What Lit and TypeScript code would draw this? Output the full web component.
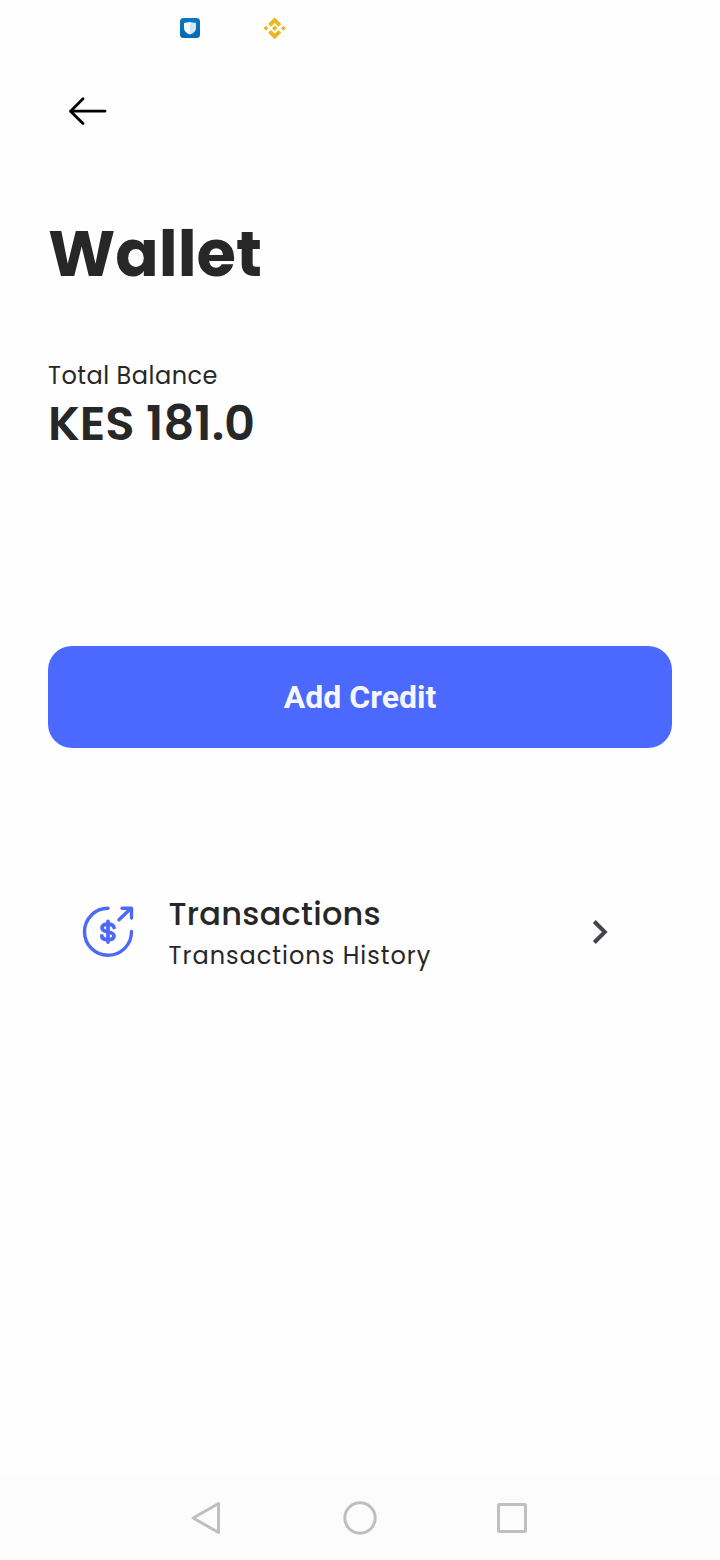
import { LitElement, html, css } from "lit";
import { customElement } from "lit/decorators.js";

@customElement("app-root")
class AppRoot extends LitElement {
  static styles = css`
    :host { display: flex; flex-direction: column; height: 1560px; background: #fefefe; color: #272727; font-family: Poppins, Inter, sans-serif; }
    * { box-sizing: border-box; }
    svg { display: block; flex: none; }
    .status { display: flex; height: 56px; padding-left: 179px; align-items: center; gap: 62px; }
    .top { height: 158px; padding: 40px 0 0 67px; }
    main { flex: 1; padding: 0 48px; display: flex; flex-direction: column; }
    h1 { margin: 0; font-size: 64px; line-height: 80px; font-weight: 700; white-space: nowrap; }
    .balance { margin-top: 64px; height: 288px; white-space: nowrap; }
    .label { font-size: 24px; line-height: 36px; letter-spacing: 0.5px; }
    .amount { font-size: 48px; line-height: 60px; font-weight: 600; }
    .add { height: 102px; border: 0; border-radius: 24px; background: #4b69ff; color: #f6f6fc; font: 700 32px Roboto, sans-serif; padding: 0; }
    .row { margin-top: 144px; display: flex; padding: 0 62px 0 32px; height: 82px; }
    .pay { margin-top: 12px; }
    .words { flex: 1; padding: 1px 0 0 32.5px; white-space: nowrap; }
    .title { font-size: 32px; line-height: 42px; font-weight: 500; letter-spacing: 0.25px; }
    .sub { font-size: 24px; line-height: 36px; letter-spacing: 1px; margin-top: 3px; }
    .chev { margin-top: 26px; }
    nav { height: 84px; background: #fcfcfc; display: flex; justify-content: center; gap: 112px; padding-top: 22px; }
  `;
  render() {
    return html`
      <div class="status">
        <svg width="22" height="22" viewBox="0 0 22 22">
          <defs><linearGradient id="b" x2="0" y2="1"><stop stop-color="#0879bd" /><stop offset="1" stop-color="#0668b0" /></linearGradient></defs>
          <rect x="1" y="1" width="20" height="20" rx="3.5" fill="url(#b)" />
          <path d="M11 5Q13.5 5.500 17 6V11.500Q16.500 15.500 11 17.500Z" fill="#d3e8f5" />
          <path d="M11 5Q8.500 5.500 5 6V11.500Q5.500 15.500 11 17.500Z" fill="#f4faff" />
        </svg>
        <svg width="24" height="24" viewBox="0 0 24 24" fill="#e8b923">
          <path d="M11.700 1.300L18.300 7.900L15.500 10.700L11.700 7L7.900 10.700L5.100 7.900Z" />
          <path d="M11.700 23.300L18.300 16.700L15.500 13.900L11.700 17.600L7.900 13.900L5.100 16.700Z" />
          <path d="M3 9.800L5.500 12.300L3 14.800L.5 12.300ZM20.400 9.800L22.900 12.300L20.400 14.800L17.900 12.300ZM11.700 9.600L14.400 12.300L11.700 15L9 12.300Z" />
        </svg>
      </div>
      <div class="top">
        <svg width="40" height="30" viewBox="0 0 40 30" fill="none" stroke="#000" stroke-width="2.8" stroke-linecap="round" stroke-linejoin="round"><path d="M38 15.200H3.500M16 2.800L3.600 15.200L16 27.600" /></svg>
      </div>
      <main>
        <h1>Wallet</h1>
        <div class="balance"><div class="label">Total Balance</div><div class="amount">KES 181.0</div></div>
        <button class="add">Add Credit</button>
        <div class="row">
          <svg class="pay" width="56" height="56" viewBox="0 0 56 56" fill="none" stroke="#4d69f5" stroke-width="3.400" stroke-linecap="round" stroke-linejoin="round">
            <path d="M28 4.300A23.500 23.500 0 1 0 51.500 27.400" />
            <path d="M39 15.800L51 4.300M42 4.300H51.500V14" />
            <path stroke-width="3.800" d="M34 23.500C33.500 21 31.500 20.200 28 20.200C24.300 20.200 22 21.500 22 24C22 29 34 26.500 34 32C34 34.500 31.700 35.700 28 35.700C24.300 35.700 22 34.500 21.800 32M28 17.500V38" />
          </svg>
          <div class="words"><div class="title">Transactions</div><div class="sub">Transactions History</div></div>
          <svg class="chev" width="20" height="28" viewBox="0 0 20 28" fill="none" stroke="#46434d" stroke-width="4"><path d="M4.300 3.500L14.800 14L4.300 24.500" /></svg>
        </div>
      </main>
      <nav>
        <svg width="40" height="40" viewBox="0 0 40 40" fill="none" stroke="#bfbfbf" stroke-width="3" stroke-linejoin="round"><path d="M28.500 5.500V34.500L3.200 20Z" transform="translate(2 0)" /></svg>
        <svg width="40" height="40" viewBox="0 0 40 40" fill="none" stroke="#bfbfbf" stroke-width="3"><circle cx="20" cy="20" r="15.200" /></svg>
        <svg width="40" height="40" viewBox="0 0 40 40" fill="none" stroke="#bfbfbf" stroke-width="3"><rect x="6.500" y="6.500" width="27" height="27" rx="1" /></svg>
      </nav>`;
  }
}
